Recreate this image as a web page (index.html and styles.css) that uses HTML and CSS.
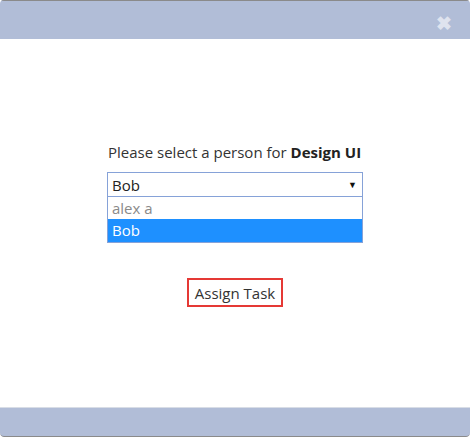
FILE: index.html
```html
<!DOCTYPE html>
<html>
<head>
<meta charset="utf-8">
<link rel="stylesheet" href="styles.css">
</head>
<body>
<div class="dialog">
  <div class="header">
    <span class="close">&#10006;</span>
  </div>
  <div class="content">
    <div class="form">
      <p class="label">Please select a person for <b>Design UI</b></p>
      <div class="select">
        <span>Bob</span>
        <span class="arrow">&#9660;</span>
      </div>
      <ul class="options">
        <li class="opt muted">alex a</li>
        <li class="opt selected">Bob</li>
      </ul>
    </div>
    <button class="assign">Assign Task</button>
  </div>
  <div class="footer"></div>
</div>
</body>
</html>
```
FILE: styles.css
```css
html, body {
  margin: 0;
  padding: 0;
  background: #ffffff;
}
body {
  font-family: "Open Sans", "Noto Sans", sans-serif;
  color: #333;
}
.dialog {
  width: 470px;
  height: 437px;
  display: flex;
  flex-direction: column;
  box-sizing: border-box;
  border-radius: 4px;
  overflow: hidden;
}
.header {
  height: 38px;
  background: #b1bdd7;
  border-top: 1px solid #8a8a8a;
  display: flex;
  justify-content: flex-end;
  align-items: center;
  padding-right: 18px;
}
.close {
  color: #dfe3ee;
  font-size: 19px;
  font-weight: bold;
  line-height: 1;
  margin-top: 6px;
}
.content {
  flex: 1;
  display: flex;
  flex-direction: column;
  align-items: center;
  padding-top: 102px;
}
.form {
  width: 256px;
}
.label {
  margin: 0 0 9px 0;
  font-size: 15px;
  line-height: 22px;
  color: #333;
  white-space: nowrap;
  padding-left: 1px;
}
.label b {
  color: #222;
}
.select {
  box-sizing: border-box;
  height: 25px;
  border: 1px solid #86a2d8;
  display: flex;
  justify-content: space-between;
  align-items: center;
  padding: 0 5px 0 4px;
  font-size: 15px;
  color: #222;
}
.arrow {
  font-size: 9px;
  color: #111;
}
.options {
  list-style: none;
  margin: 0;
  padding: 0;
  border: 1px solid #86a2d8;
  border-top: none;
}
.opt {
  height: 22px;
  line-height: 22px;
  padding-left: 4px;
  font-size: 15px;
}
.muted {
  color: #8a8a8a;
}
.selected {
  height: 23px;
  line-height: 23px;
  background: #1e90ff;
  color: #ffffff;
}
.assign {
  margin-top: 35px;
  font-family: "Open Sans", "Noto Sans", sans-serif;
  font-size: 15px;
  color: #333;
  background: #fff;
  border: 2px solid #e53935;
  width: 96px;
  height: 29px;
  padding: 0;
}
.footer {
  height: 28px;
  background: #b1bdd7;
  border-top: 1px solid #d8dde6;
  border-bottom: 1px solid #8a8a8a;
  border-radius: 0 0 4px 4px;
}
```
